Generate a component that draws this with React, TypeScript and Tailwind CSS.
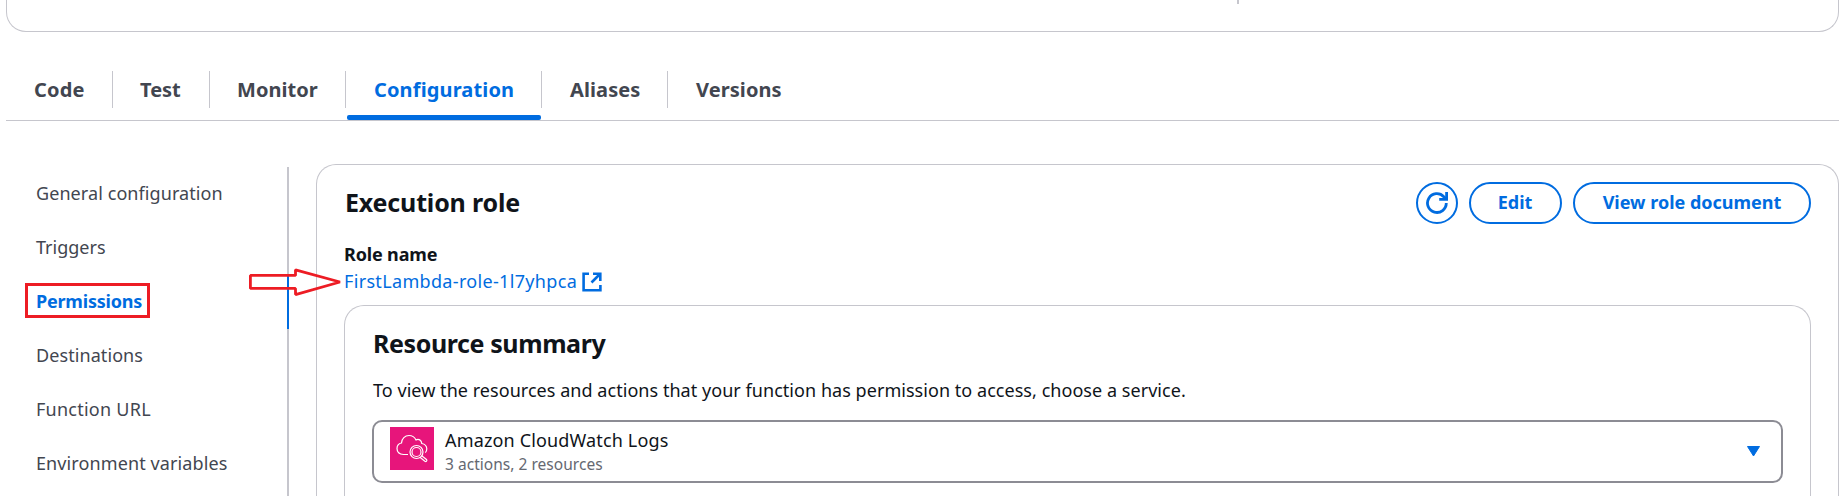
import React from "react";

const tabs = [
  { label: "Code", cls: "w-[107px]", text: "tracking-[0.2px]", active: false },
  { label: "Test", cls: "w-[97px]", text: "-ml-px", active: false },
  { label: "Monitor", cls: "w-[136px]", text: "-ml-px tracking-[0.05px]", active: false },
  { label: "Configuration", cls: "w-[196px]", text: "tracking-[0.14px]", active: true },
  { label: "Aliases", cls: "w-[126px]", text: "tracking-[0.1px]", active: false },
  { label: "Versions", cls: "w-[140px]", text: "tracking-[0.08px]", active: false },
];

const sections = [
  { label: "General configuration", text: "tracking-[0.08px]" },
  { label: "Triggers", text: "" },
  { label: "Permissions", text: "tracking-[-0.2px]", active: true },
  { label: "Destinations", text: "tracking-[0.08px]" },
  { label: "Function URL", text: "tracking-[0.25px]" },
  { label: "Environment variables", text: "tracking-[0.11px]" },
];

function RefreshIcon() {
  return (
    <svg className="h-[22px] w-[22px]" viewBox="0 0 22 22" fill="none" stroke="currentColor" strokeWidth="2.8">
      <path d="M20.300 11a9.400 9.400 0 1 1-2.500-6.300l2.200 2.300" />
      <path d="M20.600 0v7.400h-7.400" />
    </svg>
  );
}

function ExternalIcon() {
  return (
    <svg className="h-5 w-5" viewBox="0 0 20 20" fill="none" stroke="currentColor" strokeWidth="2.6">
      <path d="M7 1.700H1.600v16.600h16.800V13" />
      <path d="M11 1.700h7.300V9M18 2l-8.500 8.500" />
    </svg>
  );
}

function LogsIcon() {
  return (
    <svg className="h-[43px] w-11" viewBox="0 0 44 43" fill="none" stroke="#fff" strokeWidth="1.2">
      <rect width="44" height="43" fill="#e7157b" stroke="none" />
      <path d="M18 27.500h-4.500c-4-.3-6.500-2.500-6.500-6 0-3 2-5 4.500-5.500.2-4.500 3.500-7.500 7.500-7.500 3.500 0 5.800 2 7 4.500 2.500-1.500 5.500 0 5.800 3.500 3 .6 4.800 2.500 5 5.200 0 1.500-.5 3-1.500 4" />
      <circle cx="26.500" cy="25" r="6.500" />
      <circle cx="26.500" cy="25" r="4.500" />
      <path d="M31.700 28.800l4.800 3.700c1 1.200-.4 2.600-1.600 1.800l-5-4" />
    </svg>
  );
}

function Card({ className, children }: { className: string; children?: React.ReactNode }) {
  return <section className={`border border-[#c6c6cd] bg-white ${className}`}>{children}</section>;
}

export default function App() {
  return (
    <div className="relative h-[496px] w-[1845px] overflow-hidden bg-white pl-1.5 font-['Noto_Sans',sans-serif] text-[18px] text-[#0f141a]">
      <Card className="flex h-8 w-[1833px] rounded-b-[20px] border-t-0">
        <div className="ml-[1230px] h-1 w-0.5 bg-[#c6c6cd]" />
      </Card>

      <nav className="mt-[39px] flex h-[50px] w-[1833px] border-b border-[#c6c6cd] text-[20px] font-bold">
        {tabs.map((t, i) => (
          <div key={t.label} className={`relative ${t.cls}`}>
            <div
              className={`h-[37px] pl-7 leading-[38px] whitespace-nowrap ${i < tabs.length - 1 ? "border-r border-[#c6c6cd]" : ""} ${t.active ? "text-[#006ce0]" : "text-[#424650]"}`}
            >
              <span className={t.text}>{t.label}</span>
            </div>
            {t.active && <div className="absolute right-px bottom-0 left-px h-[5px] rounded-[2px] bg-[#006ce0]" />}
          </div>
        ))}
      </nav>

      <main className="flex">
        <aside className="mt-[46px] h-[340px] w-[283px] border-r-2 border-[#c6c6cd] text-[#424650]">
          {sections.map((s) => (
            <div
              key={s.label}
              className={`-mr-0.5 flex h-[54px] items-center pb-0.5 pl-[30px] whitespace-nowrap ${s.active ? "border-r-2 border-[#006ce0] font-bold text-[#006ce0]" : ""}`}
            >
              <span className={s.text}>{s.label}</span>
            </div>
          ))}
        </aside>

        <Card className="mt-[43px] ml-[27px] h-[360px] w-[1523px] rounded-t-[20px] border-b-0 pl-[27px]">
          <div className="flex h-[59px] items-start justify-between pt-[17px] pr-[27px]">
            <h2 className="ml-px text-[25px] leading-[40px] font-bold tracking-[-0.17px] whitespace-nowrap">Execution role</h2>
            <div className="flex gap-[11px] text-[18px] font-bold text-[#006ce0]">
              <button className="flex h-[42px] w-[42px] items-center justify-center rounded-full border-2 border-[#006ce0]">
                <RefreshIcon />
              </button>
              <button className="h-[42px] w-[93px] rounded-full border-2 border-[#006ce0] pr-px pb-0.5">Edit</button>
              <button className="h-[42px] w-[238px] rounded-full border-2 border-[#006ce0] pb-0.5 whitespace-nowrap">View role document</button>
            </div>
          </div>

          <div className="mt-[17px] text-[18px] leading-[27px]">
            <div className="font-bold tracking-[-0.15px]">Role name</div>
            <div className="flex items-center text-[#006ce0]">
              <span className="w-[238px] tracking-[0.33px] whitespace-nowrap">FirstLambda-role-1l7yhpca</span>
              <ExternalIcon />
            </div>
          </div>

          <Card className="mt-[10px] h-[300px] w-[1467px] rounded-t-[20px] border-b-0 pl-[27px]">
            <h2 className="mt-[19px] ml-px text-[25px] leading-[36px] font-bold tracking-[-0.4px]">Resource summary</h2>
            <p className="mt-[16px] ml-px leading-[27px] tracking-[0.045px] whitespace-nowrap">
              To view the resources and actions that your function has permission to access, choose a service.
            </p>
            <div className="mt-[16px] flex h-[63px] w-[1411px] items-start rounded-[10px] border-2 border-[#8c8c94] pt-[5px] pl-4">
              <LogsIcon />
              <div className="ml-[11px] whitespace-nowrap">
                <div className="text-[18px] leading-[26px] tracking-[0.15px]">Amazon CloudWatch Logs</div>
                <div className="text-[15.5px] leading-[22px] tracking-[0.03px] text-[#656871]">3 actions, 2 resources</div>
              </div>
              <svg className="mt-[19px] mr-[21px] ml-auto h-[11px] w-[13px]" viewBox="0 0 13 11" fill="#006ce0" stroke="#006ce0" strokeLinejoin="round">
                <path d="M.5.5h12l-6 9.500z" />
              </svg>
            </div>
          </Card>
        </Card>
      </main>

      <div className="absolute top-[283px] left-[25px] h-[35px] w-[125px] border-[3px] border-[#ed1c24]" />
      <svg className="absolute top-[266px] left-[248px] h-8 w-[96px]" viewBox="0 0 96 32" fill="none" stroke="#ed1c24" strokeWidth="2.8" strokeLinejoin="bevel">
        <path d="M2.400 9.400H47.500V3.800L92 16 47.500 28.600v-6.200H2.400z" />
      </svg>
    </div>
  );
}
